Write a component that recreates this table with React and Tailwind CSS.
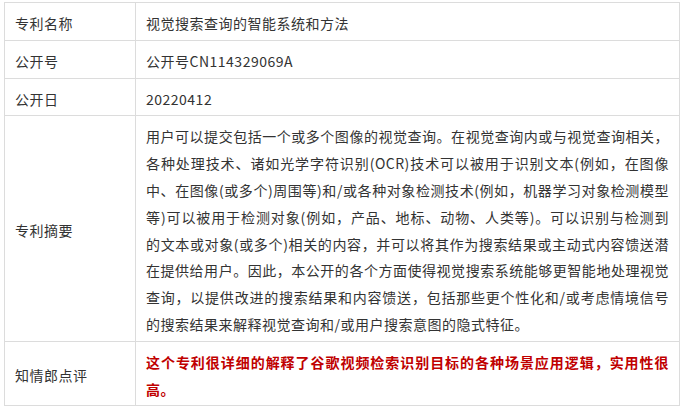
export default function App() {
  const abstract = [
    "用户可以提交包括一个或多个图像的视觉查询。在视觉查询内或与视觉查询相关，",
    "各种处理技术、诸如光学字符识别(OCR)技术可以被用于识别文本(例如，在图像",
    "中、在图像(或多个)周围等)和/或各种对象检测技术(例如，机器学习对象检测模型",
    "等)可以被用于检测对象(例如，产品、地标、动物、人类等)。可以识别与检测到",
    "的文本或对象(或多个)相关的内容，并可以将其作为搜索结果或主动式内容馈送潜",
    "在提供给用户。因此，本公开的各个方面使得视觉搜索系统能够更智能地处理视觉",
    "查询，以提供改进的搜索结果和内容馈送，包括那些更个性化和/或考虑情境信号",
  ];
  const last = "的搜索结果来解释视觉查询和/或用户搜索意图的隐式特征。";
  const cell = "border border-[#dcdcdc] px-[10px] pt-[7px] pb-[3px] align-middle";
  return (
    <div className="w-[684px] h-[410px] bg-white pt-[2px] pl-[4px] font-['Noto_Sans_CJK_SC','Microsoft_YaHei',sans-serif] text-[14px] leading-[26.8px] tracking-[0.5px] text-[#333]">
      <table className="w-[676px] table-fixed border-collapse">
        <colgroup>
          <col className="w-[131px]" />
          <col />
        </colgroup>
        <tbody>
          <tr>
            <td className={cell}>专利名称</td>
            <td className={cell}>视觉搜索查询的智能系统和方法</td>
          </tr>
          <tr>
            <td className={cell}>公开号</td>
            <td className={cell}>公开号CN114329069A</td>
          </tr>
          <tr>
            <td className={cell}>公开日</td>
            <td className={cell}>20220412</td>
          </tr>
          <tr>
            <td className={cell}>专利摘要</td>
            <td className={cell}>
              {abstract.map((l, i) => (
                <div key={i} className="text-justify [text-align-last:justify] whitespace-nowrap">
                  {l}
                </div>
              ))}
              <div>{last}</div>
            </td>
          </tr>
          <tr>
            <td className={cell}>知情郎点评</td>
            <td className={cell + " font-bold text-[#c00000]"}>
              <div className="text-justify [text-align-last:justify] whitespace-nowrap">
                这个专利很详细的解释了谷歌视频检索识别目标的各种场景应用逻辑，实用性很
              </div>
              <div>高。</div>
            </td>
          </tr>
        </tbody>
      </table>
    </div>
  );
}
